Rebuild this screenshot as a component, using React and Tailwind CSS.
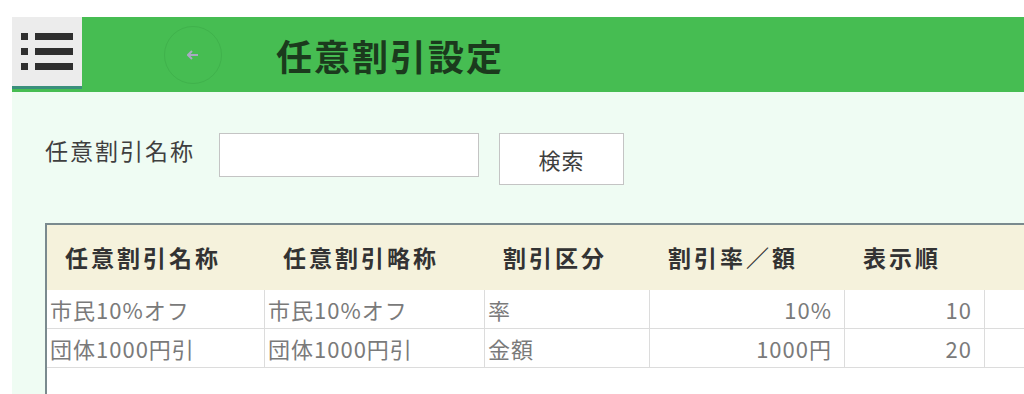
import React, { useState } from "react";

const FONT = { fontFamily: '"Noto Sans CJK JP", "Noto Sans", sans-serif' };

const columns = [
  { key: "name", label: "任意割引名称", width: "w-[218px]", align: "text-left" },
  { key: "short", label: "任意割引略称", width: "w-[220px]", align: "text-left" },
  { key: "kind", label: "割引区分", width: "w-[165px]", align: "text-left" },
  { key: "value", label: "割引率／額", width: "w-[195px]", align: "text-right" },
  { key: "order", label: "表示順", width: "w-[140px]", align: "text-right" },
];

const rows = [
  { id: 1, name: "市民10%オフ", short: "市民10%オフ", kind: "率", value: "10%", order: "10" },
  { id: 2, name: "団体1000円引", short: "団体1000円引", kind: "金額", value: "1000円", order: "20" },
];

// menu icon: square + bar, three times
const MenuIcon = () => (
  <div className="flex flex-col gap-[8px]">
    {[0, 1, 2].map((i) => (
      <div key={i} className="flex items-center gap-[7px]">
        <div className="w-[7px] h-[7px] bg-[#2f2f2f]" />
        <div className="w-[38px] h-[7px] bg-[#2f2f2f]" />
      </div>
    ))}
  </div>
);

const App = () => {
  const [keyword, setKeyword] = useState("");

  return (
    <div className="w-[1024px] h-[394px] overflow-hidden bg-white pt-[17px] pl-[12px]" style={FONT}>
      {/* Header bar */}
      <div className="h-[75px] flex items-stretch bg-[#46bd52]">
        <div className="w-[70px] h-[72px] bg-[#ececec] border-b-[3px] border-[#3a8f7c] flex items-center justify-center">
          <MenuIcon />
        </div>
        <div className="ml-[82px] flex items-center">
          <div className="w-[58px] h-[58px] rounded-full border border-[#40b24c] flex items-center justify-center">
            <svg width="12" height="10" viewBox="0 0 12 10">
              <path d="M5 1 L1 5 L5 9 M1 5 H11" stroke="#a9a9c4" strokeWidth="2" fill="none" />
            </svg>
          </div>
        </div>
        <h1 className="ml-[54px] flex items-center text-[36px] font-bold tracking-[2px] text-[#1b3a1d]">
          任意割引設定
        </h1>
      </div>

      {/* Content */}
      <div className="h-[302px] bg-[#effcf3] pl-[33px]">
        <div className="flex items-start pt-[41px]">
          <label className="mt-[2px] text-[23px] tracking-[2px] text-[#3f3f3f] leading-[30px]">任意割引名称</label>
          <input
            value={keyword}
            onChange={(e) => setKeyword(e.target.value)}
            className="ml-[24px] w-[260px] h-[44px] bg-white border border-[#c4c4c4] outline-none px-2 text-[18px]"
          />
          <button className="ml-[20px] w-[125px] h-[52px] bg-white border border-[#c4c4c4] text-[22px] tracking-[1px] text-[#3f3f3f]">
            検索
          </button>
        </div>

        {/* Table */}
        <div className="mt-[38px] bg-white border-t-2 border-l-2 border-[#7a8a8e] h-[200px]">
          <div className="flex h-[65px] bg-[#f5f2dc]">
            {columns.map((c) => (
              <div key={c.key} className={`${c.width} flex items-center pl-[18px] text-[23px] font-bold tracking-[3px] text-[#333]`}>
                {c.label}
              </div>
            ))}
            <div className="flex-1" />
          </div>
          {rows.map((r) => (
            <div key={r.id} className="flex h-[39px] border-b border-[#dcdcdc]">
              {columns.map((c) => (
                <div
                  key={c.key}
                  className={`${c.width} ${c.align} border-r border-[#dcdcdc] pl-[3px] pr-[12px] leading-[38px] text-[22px] tracking-[1px] text-[#7a7a7a] whitespace-nowrap`}
                >
                  {r[c.key]}
                </div>
              ))}
              <div className="flex-1" />
            </div>
          ))}
        </div>
      </div>
    </div>
  );
};

export default App;
